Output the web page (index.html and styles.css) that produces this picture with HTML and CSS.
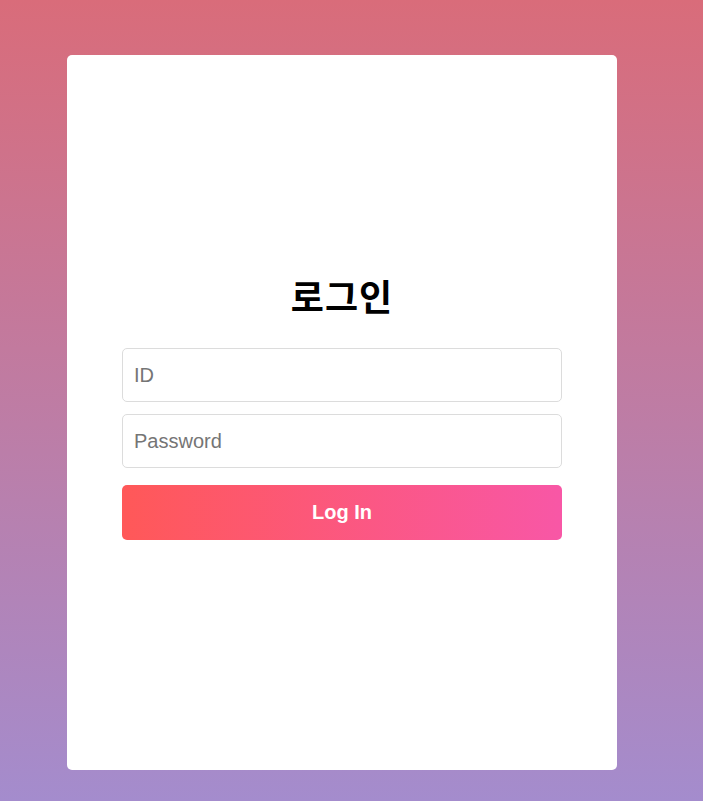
FILE: index.html
```html
<!DOCTYPE html>
<html lang="ko">
<head>
<meta charset="utf-8">
<title>로그인</title>
<link rel="stylesheet" href="styles.css">
</head>
<body>
  <div class="card">
    <h2 class="title">로그인</h2>
    <form class="form">
      <input class="field" type="text" placeholder="ID">
      <input class="field" type="password" placeholder="Password">
      <button class="btn" type="button">Log In</button>
    </form>
  </div>
</body>
</html>
```

FILE: styles.css
```css
html, body {
  margin: 0;
  height: 100%;
}
body {
  background: linear-gradient(to bottom, #d96c7a 0%, #a48ccd 100%);
  font-family: "Liberation Sans", Arial, sans-serif;
  padding: 55px 0 0 67px;
  box-sizing: border-box;
}
.card {
  width: 550px;
  height: 715px;
  background: #fff;
  border-radius: 5px;
  box-sizing: border-box;
  padding: 220px 55px 0;
  display: flex;
  flex-direction: column;
}
.title {
  margin: 0;
  font-family: "Noto Sans CJK KR", "Noto Sans", sans-serif;
  font-size: 36px;
  font-weight: 700;
  letter-spacing: 1px;
  line-height: 40px;
  text-align: center;
  color: #000;
}
.form {
  margin-top: 33px;
  display: flex;
  flex-direction: column;
}
.field {
  height: 54px;
  box-sizing: border-box;
  border: 1px solid #dcdcdc;
  border-radius: 5px;
  padding: 0 11px;
  font-family: "Liberation Sans", Arial, sans-serif;
  font-size: 20px;
  color: #333;
  outline: none;
  margin-bottom: 12px;
}
.field::placeholder {
  color: #757575;
}
.field + .field {
  margin-bottom: 17px;
}
.btn {
  height: 55px;
  border: none;
  border-radius: 5px;
  background: linear-gradient(to right, #ff5858, #f857a6);
  color: #fff;
  font-family: "Liberation Sans", Arial, sans-serif;
  font-size: 20px;
  font-weight: 700;
  cursor: pointer;
}
```
